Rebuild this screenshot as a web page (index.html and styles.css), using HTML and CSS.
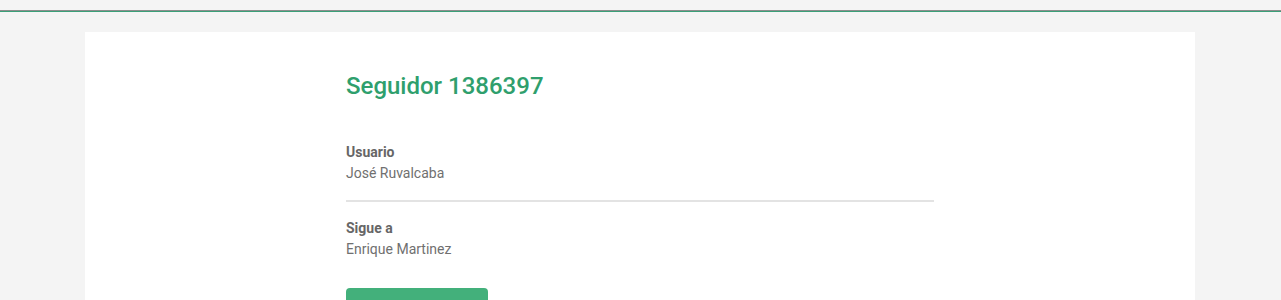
FILE: index.html
```html
<!DOCTYPE html>
<html lang="es">
<head>
<meta charset="utf-8">
<title>Seguidor 1386397</title>
<link rel="stylesheet" href="styles.css">
</head>
<body>
<div class="topbar"></div>
<main class="page">
  <section class="card">
    <div class="content">
      <h1 class="title">Seguidor 1386397</h1>
      <div class="field">
        <div class="label">Usuario</div>
        <div class="value">José Ruvalcaba</div>
      </div>
      <hr class="divider">
      <div class="field">
        <div class="label">Sigue a</div>
        <div class="value">Enrique Martinez</div>
      </div>
      <div class="actions">
        <button class="btn">Editar</button>
      </div>
    </div>
  </section>
</main>
</body>
</html>
```

FILE: styles.css
```css
* { box-sizing: border-box; }
html, body { margin: 0; padding: 0; }
body {
  background: #f4f4f4;
  font-family: Roboto, "Liberation Sans", sans-serif;
  color: #666;
}
.topbar {
  height: 12px;
  background: linear-gradient(to bottom, #f4f4f4 0, #f4f4f4 10px, #8d8d8d 10px, #8d8d8d 11px, #3a9f78 11px, #3a9f78 12px);
}
.page {
  padding: 20px 1px 0 0;
  display: flex;
  justify-content: center;
}
.card {
  width: 1110px;
  background: #fff;
  padding: 40px 0 40px;
  display: flex;
  justify-content: center;
}
.content {
  width: 588px;
}
.title {
  margin: 0 0 42px;
  font-size: 24px;
  line-height: 28px;
  font-weight: 500;
  color: #2f9f6d;
}
.label {
  font-size: 14px;
  line-height: 20px;
  font-weight: 700;
  color: #666;
}
.value {
  padding-top: 1px;
  font-size: 14px;
  line-height: 20px;
  color: #707070;
}
.divider {
  margin: 17px 0 16px;
  border: 0;
  height: 2px;
  background: #e3e3e3;
}
.actions {
  margin-top: 29px;
}
.btn {
  width: 142px;
  height: 48px;
  border: 0;
  border-radius: 4px;
  background: #43b07b;
  color: #fff;
  font-family: inherit;
  font-size: 14px;
  font-weight: 500;
}
```
